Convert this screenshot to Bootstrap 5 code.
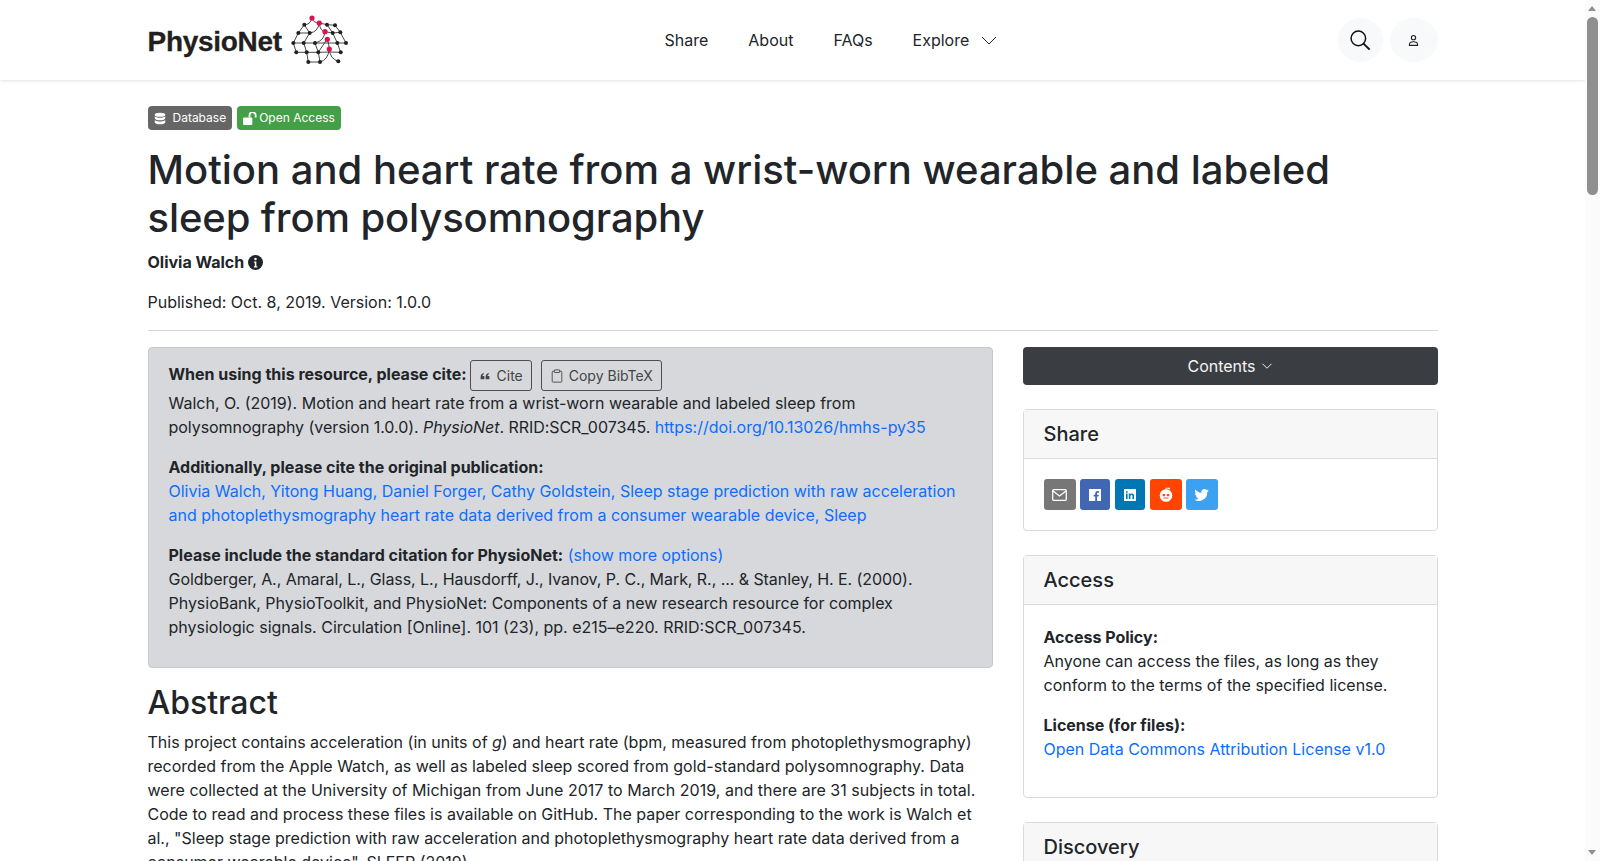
<!DOCTYPE html>
<html lang="en">
<head>
<meta charset="utf-8">
<title>PhysioNet</title>
<link href="https://cdn.jsdelivr.net/npm/bootstrap@5.3.0/dist/css/bootstrap.min.css" rel="stylesheet">
<style>
html,body{height:100%}
body{font-family:"Inter",sans-serif;font-size:16px;line-height:24px;color:#212529;overflow:hidden;background:#fff}
.shell{display:flex;height:861px;overflow:hidden}
.viewarea{width:1585px;flex:none;height:861px;overflow:hidden}
.fakebar{width:15px;flex:none;background:#fbfbfb;position:relative}
.fakebar .thumb{position:absolute;left:2px;right:2px;top:17px;height:178px;background:#8f8f8f;border-radius:6px}
.fakebar .up,.fakebar .down{position:absolute;left:3px;width:0;height:0;border-left:4.5px solid transparent;border-right:4.5px solid transparent}
.fakebar .up{top:6px;border-bottom:5px solid #8f8f8f}
.fakebar .down{bottom:6px;border-top:5px solid #8f8f8f}
.wrapbox{width:1320px;margin:0 auto;padding:0 15px}
.topbar{height:80px;background:#fff;box-shadow:0 1px 3px rgba(0,0,0,.12)}
.topbar .wrapbox{height:80px;display:flex;align-items:center}
.brandbox{display:flex;align-items:center;width:422px;text-decoration:none}
.brandtext{font-family:"Liberation Sans",sans-serif;font-weight:700;font-size:28px;color:#231f20;letter-spacing:-.3px;-webkit-text-stroke:.3px #231f20;line-height:1;padding-top:4px;width:137px;flex:none}
.navlinks{display:flex;gap:40px;align-items:center;margin-left:95px}
.navlinks a{color:#212529;text-decoration:none}
.roundbtn{width:45px;height:44px;border-radius:50%;background:#f8f9fa;display:flex;align-items:center;justify-content:center}
.roundbtn.wide{width:48px;margin-left:7px}
.tagline{padding-top:26px;display:flex;gap:5px}
.tagpill{display:inline-flex;align-items:center;height:24px;font-size:12px;color:#fff;border-radius:4px;padding:0 6px}
.tagpill.grey{background:#666;gap:7px}
.tagpill.green{background:#43a047;gap:2px}
.maintitle{font-size:40px;line-height:48px;font-weight:500;margin:16px 0 0;letter-spacing:0}
.ls-title{letter-spacing:-.12px}
.ls-tight{letter-spacing:-.06px}
.ls-cite{letter-spacing:-.05px}
.ls-soft{letter-spacing:-.025px}
.ls-wide{letter-spacing:.035px}
.authorline{font-weight:700;margin:7px 0 0;display:flex;align-items:center;gap:4px;height:26px}
.publine{margin:15px 0 0}
.rulebar{border:0;border-top:1px solid #d8d8d8;opacity:1;margin:16px 0}
.twocol{display:grid;grid-template-columns:845px 415px;gap:30px;align-items:start}
.citebox{background:#d6d8db;border:1px solid #c6c8ca;border-radius:4px;padding:12px 20px 16px;height:321px}
.citebox p{margin:0 0 16px}
.citehead{display:flex;align-items:flex-start;gap:9px;height:31px}
.citebox b{font-weight:700}
.citehead b{margin:2px -6px 0 0}
.btnghost{display:inline-flex;align-items:center;gap:5px;height:31px;border:1px solid #4a4f54;border-radius:3px;padding:0 8px;font-size:14px;color:#444;background:transparent;line-height:1}
.btnghost.cite{gap:7px;padding-left:9px}
.citebox a,.side a{color:#0d6efd;text-decoration:none}
.sectitle{font-size:32px;line-height:38px;font-weight:500;margin:16px 0 8px}
.contentsbtn{display:flex;justify-content:center;align-items:center;gap:5px;height:38px;background:#3a3e42;color:#f4f4f4;border-radius:4px;width:100%;border:0}
.sidecard{border:1px solid #dadada;border-radius:4px;margin-top:24px;background:#fff}
.sidehead{background:#f7f7f7;border-bottom:1px solid #dadada;height:49px;padding:0 20px;display:flex;align-items:center;font-size:20px;font-weight:500}
.sidebody{padding:20px}
.sharerow{display:flex;gap:4px;height:31px}
.sharebtn{height:31px;width:32px;border-radius:3px;display:flex;align-items:center;justify-content:center}
.sharebtn.mid{width:30px;margin-right:1px}
.sh-mail{background:#777}.sh-fb{background:#4267b2}.sh-li{background:#0077b5}.sh-re{background:#ff4500}.sh-tw{background:#3da1f2}
.sidebody p{margin:0 0 16px}
.sidebody b{font-weight:700}
</style>
</head>
<body>
<div class="shell">
<div class="viewarea">
<header class="topbar">
<div class="wrapbox">
<a class="brandbox" href="#"><span class="brandtext">PhysioNet</span>
<svg width="70" height="60" viewBox="0 0 70 60">
<g fill="none" stroke="#333" stroke-width=".9">
<path d="M34.300 13L42 14.700L50 15.300M13.300 23L24.700 23M40 21.700L47.700 23L55.300 22.300M8.300 33L18.700 33L30 33L52.300 33L61 33M11.300 42.300L21.700 42.300L33.300 42.300L44.300 42L55.700 42.300M23.300 52L35 52"/>
<path d="M19.300 14.700L13.300 23L8.300 33L11.300 42.300M24.700 23L18.700 33L21.700 42.300L23.300 52M30 33L33.300 42.300L35 52M42 14.700L47.700 23L52.300 33L55.700 42.300M50 15.300L55.300 22.300L61 33M19.300 14.700L24.700 23"/>
<path d="M19.300 14.700Q25 15 27 8Q28 13 34.300 13M24.700 23Q33 22 34.300 13Q35 21 40 21.700M30 33Q39 31 40 21.700M42.300 29.300Q38 35 33.300 42.300M42.300 29.300Q44 34 44.300 39M35 52Q43 50 44.300 39Q45 49 53.300 51.300"/>
</g>
<g fill="#231f20">
<circle cx="19.300" cy="14.700" r="2"/><circle cx="42" cy="14.700" r="2"/><circle cx="50" cy="15.300" r="2"/><circle cx="13.300" cy="23" r="2"/><circle cx="24.700" cy="23" r="2"/><circle cx="47.700" cy="23" r="2"/><circle cx="55.300" cy="22.300" r="2"/><circle cx="8.300" cy="33" r="2"/><circle cx="18.700" cy="33" r="2"/><circle cx="30" cy="33" r="2"/><circle cx="52.300" cy="33" r="2"/><circle cx="61" cy="33" r="2"/><circle cx="11.300" cy="42.300" r="2"/><circle cx="21.700" cy="42.300" r="2"/><circle cx="33.300" cy="42.300" r="2"/><circle cx="55.700" cy="42.300" r="2"/><circle cx="23.300" cy="52" r="2"/><circle cx="35" cy="52" r="2"/><circle cx="53.300" cy="51.300" r="2"/>
</g>
<g fill="#e0104f"><circle cx="27" cy="8" r="2.600"/><circle cx="34.300" cy="13" r="2.600"/><circle cx="40" cy="21.700" r="2.600"/><circle cx="42.300" cy="29.300" r="2.600"/><circle cx="44.300" cy="39" r="2.600"/></g>
</svg></a>
<nav class="navlinks"><a href="#">Share</a><a href="#">About</a><a href="#">FAQs</a>
<a href="#" class="d-flex align-items-center gap-2">Explore <svg width="16" height="16" viewBox="0 0 16 16" class="ms-1"><path d="M1 5l7 7 7-7" fill="none" stroke="#212529" stroke-width="1"/></svg></a></nav>
<div class="ms-auto d-flex">
<div class="roundbtn"><svg width="22" height="22" viewBox="0 0 16 16"><circle cx="6.800" cy="6.800" r="5.300" fill="none" stroke="#111" stroke-width="1.100"/><path d="M10.600 10.600L15 15" stroke="#111" stroke-width="1.400"/></svg></div>
<div class="roundbtn wide"><svg width="13" height="13" viewBox="0 0 16 16" fill="none" stroke="#222" stroke-width="1.400"><circle cx="8" cy="4.500" r="2.600"/><path d="M3 14v-1c0-2.500 2-3.500 5-3.500s5 1 5 3.500v1z"/></svg></div>
</div>
</div>
</header>
<main class="wrapbox">
<div class="tagline">
<span class="tagpill grey"><svg width="12" height="13" viewBox="0 0 16 16" fill="#fff"><ellipse cx="8" cy="3" rx="7" ry="2.800"/><path d="M1 5v2.600c0 1.500 3 2.800 7 2.800s7-1.300 7-2.800V5c-1.200 1.300-3.800 2-7 2S2.200 6.300 1 5z"/><path d="M1 10v3c0 1.500 3 2.800 7 2.800s7-1.300 7-2.800v-3c-1.200 1.300-3.800 2-7 2s-5.800-.7-7-2z"/></svg> Database</span>
<span class="tagpill green"><svg width="14" height="13" viewBox="0 0 15 14" fill="#fff"><rect x="0" y="6" width="10" height="8" rx="1"/><path d="M7 6V3.500a3.300 3.300 0 0 1 6.600 0V6" fill="none" stroke="#fff" stroke-width="1.900"/></svg> Open Access</span>
</div>
<h1 class="maintitle">Motion and heart rate from a wrist-worn wearable and labeled <span class="ls-title">sleep from polysomnography</span></h1>
<div class="authorline">Olivia Walch <svg width="15" height="15" viewBox="0 0 16 16"><circle cx="8" cy="8" r="8" fill="#212529"/><circle cx="8" cy="4.200" r="1.300" fill="#fff"/><path d="M6.300 7h2.600v5h1v1.200H6.300V12h1V8.200h-1z" fill="#fff"/></svg></div>
<p class="publine">Published: Oct. 8, 2019. Version: 1.0.0</p>
<hr class="rulebar">
<div class="twocol">
<div>
<div class="citebox">
<div class="citehead"><b>When using this resource, please cite:</b>
<span class="btnghost cite"><svg width="10" height="10" viewBox="0 0 16 16" fill="#444"><path d="M1 9.500C1 6 3 3.500 6 3v2C4.500 5.500 4 6.500 4 8h3v5H1zM9 9.500C9 6 11 3.500 14 3v2c-1.500.5-2 1.500-2 3h3v5H9z"/></svg> Cite</span>
<span class="btnghost"><svg width="14" height="14" viewBox="0 0 16 16" fill="none" stroke="#444" stroke-width="1"><path d="M5 2.500H3.500a1 1 0 0 0-1 1V14a1 1 0 0 0 1 1h9a1 1 0 0 0 1-1V3.500a1 1 0 0 0-1-1H11"/><rect x="5" y="1" width="6" height="3" rx=".5"/></svg> Copy BibTeX</span></div>
<p>Walch, O. (2019). Motion and heart rate from a wrist-worn wearable and labeled sleep from <span class="ls-cite">polysomnography (version 1.0.0). <i>PhysioNet</i>. RRID:SCR_007345.</span> <a href="#">https://doi.org/10.13026/hmhs-py35</a></p>
<p><b>Additionally, please cite the original publication:</b><br><a href="#">Olivia Walch, Yitong Huang, Daniel Forger, Cathy Goldstein, Sleep stage prediction with raw acceleration and photoplethysmography heart rate data derived from a consumer wearable device, Sleep</a></p>
<p><b>Please include the standard citation for PhysioNet:</b> <a href="#">(show more options)</a><br><span class="ls-tight">Goldberger, A., Amaral, L., Glass, L., Hausdorff, J., Ivanov, P. C., Mark, R., ... &amp; Stanley, H. E. (2000).</span> <span class="ls-soft">PhysioBank, PhysioToolkit, and PhysioNet: Components of a new research resource for complex</span> physiologic signals. Circulation [Online]. 101 (23), pp. e215–e220. RRID:SCR_007345.</p>
</div>
<h2 class="sectitle">Abstract</h2>
<p>This project contains acceleration (in units of <i>g</i>) and heart rate (bpm, measured from photoplethysmography) recorded from the Apple Watch, as well as labeled sleep scored from gold-standard polysomnography. Data <span class="ls-wide">were collected at the University of Michigan from June 2017 to March 2019, and there are 31 subjects in total.</span> Code to read and process these files is available on GitHub. The paper corresponding to the work is Walch et al., "Sleep stage prediction with raw acceleration and photoplethysmography heart rate data derived from a consumer wearable device", SLEEP (2019).</p>
</div>
<aside class="side">
<button class="contentsbtn" type="button">Contents <svg width="12" height="12" viewBox="0 0 16 16"><path d="M2 5l6 6 6-6" fill="none" stroke="#f4f4f4" stroke-width="1.300"/></svg></button>
<div class="sidecard">
<div class="sidehead">Share</div>
<div class="sidebody"><div class="sharerow">
<span class="sharebtn sh-mail"><svg width="15" height="12" viewBox="0 0 15 12" fill="none" stroke="#fff" stroke-width="1.300"><rect x=".7" y=".7" width="13.600" height="10.600" rx="1"/><path d="M1 2l6.500 5L14 2"/></svg></span>
<span class="sharebtn mid sh-fb"><svg width="12" height="12" viewBox="0 0 12 12"><rect width="12" height="12" fill="#fff"/><path d="M8 12V7.500h1.600l.2-1.800H8V4.600c0-.5.200-.9.900-.9h1V2.100C9.700 2 9.200 2 8.600 2 7.200 2 6.200 2.900 6.200 4.400v1.300H4.600v1.800h1.600V12z" fill="#4267b2"/></svg></span>
<span class="sharebtn mid sh-li"><svg width="12" height="12" viewBox="0 0 12 12"><rect width="12" height="12" fill="#fff"/><g fill="#0077b5"><rect x="2" y="4.500" width="1.600" height="5.500"/><circle cx="2.800" cy="2.900" r=".9"/><path d="M4.800 4.500h1.500v.8c.3-.5.900-.9 1.700-.9 1.500 0 2 1 2 2.500V10H8.400V7.200c0-.7-.2-1.300-.9-1.300-.8 0-1.100.6-1.100 1.300V10H4.800z"/></g></svg></span>
<span class="sharebtn sh-re"><svg width="14" height="15" viewBox="0 0 14 15"><path d="M7 3V1l2.500.5" fill="none" stroke="#fff" stroke-width=".8"/><circle cx="10" cy="1.500" r="1" fill="#fff"/><circle cx="7" cy="8.500" r="6.300" fill="#fff"/><rect x="3.700" y="7" width="2.400" height="2.200" rx=".6" fill="#ff4500"/><rect x="7.900" y="7" width="2.400" height="2.200" rx=".6" fill="#ff4500"/><path d="M4.500 11h5" stroke="#ff4500" stroke-width=".9"/></svg></span>
<span class="sharebtn sh-tw"><svg width="15" height="12" viewBox="0 0 24 20"><path d="M24 2.400c-.9.400-1.800.7-2.800.8 1-.6 1.800-1.600 2.200-2.700-1 .6-2 1-3.100 1.200A4.900 4.900 0 0 0 11.900 6.200C7.800 6 4.200 4.100 1.700.9.400 3.100 1 6 3.200 7.500c-.8 0-1.600-.2-2.200-.6 0 2.300 1.600 4.400 4 4.900-.7.200-1.500.2-2.200.1.600 2 2.400 3.400 4.600 3.400A9.900 9.900 0 0 1 0 17.800 14 14 0 0 0 21.500 5.400c1-.7 1.800-1.700 2.500-3z" fill="#fff"/></svg></span>
</div></div>
</div>
<div class="sidecard">
<div class="sidehead">Access</div>
<div class="sidebody">
<p><b>Access Policy:</b><br>Anyone can access the files, as long as they conform to the terms of the specified license.</p>
<p><b>License (for files):</b><br><a href="#">Open Data Commons Attribution License v1.0</a></p>
</div>
</div>
<div class="sidecard">
<div class="sidehead">Discovery</div>
<div class="sidebody"><p><b>DOI (version 1.0.0):</b><br><a href="#">https://doi.org/10.13026/hmhs-py35</a></p></div>
</div>
</aside>
</div>
</main>
</div>
<div class="fakebar"><div class="up"></div><div class="thumb"></div><div class="down"></div></div>
</div>
</body>
</html>
